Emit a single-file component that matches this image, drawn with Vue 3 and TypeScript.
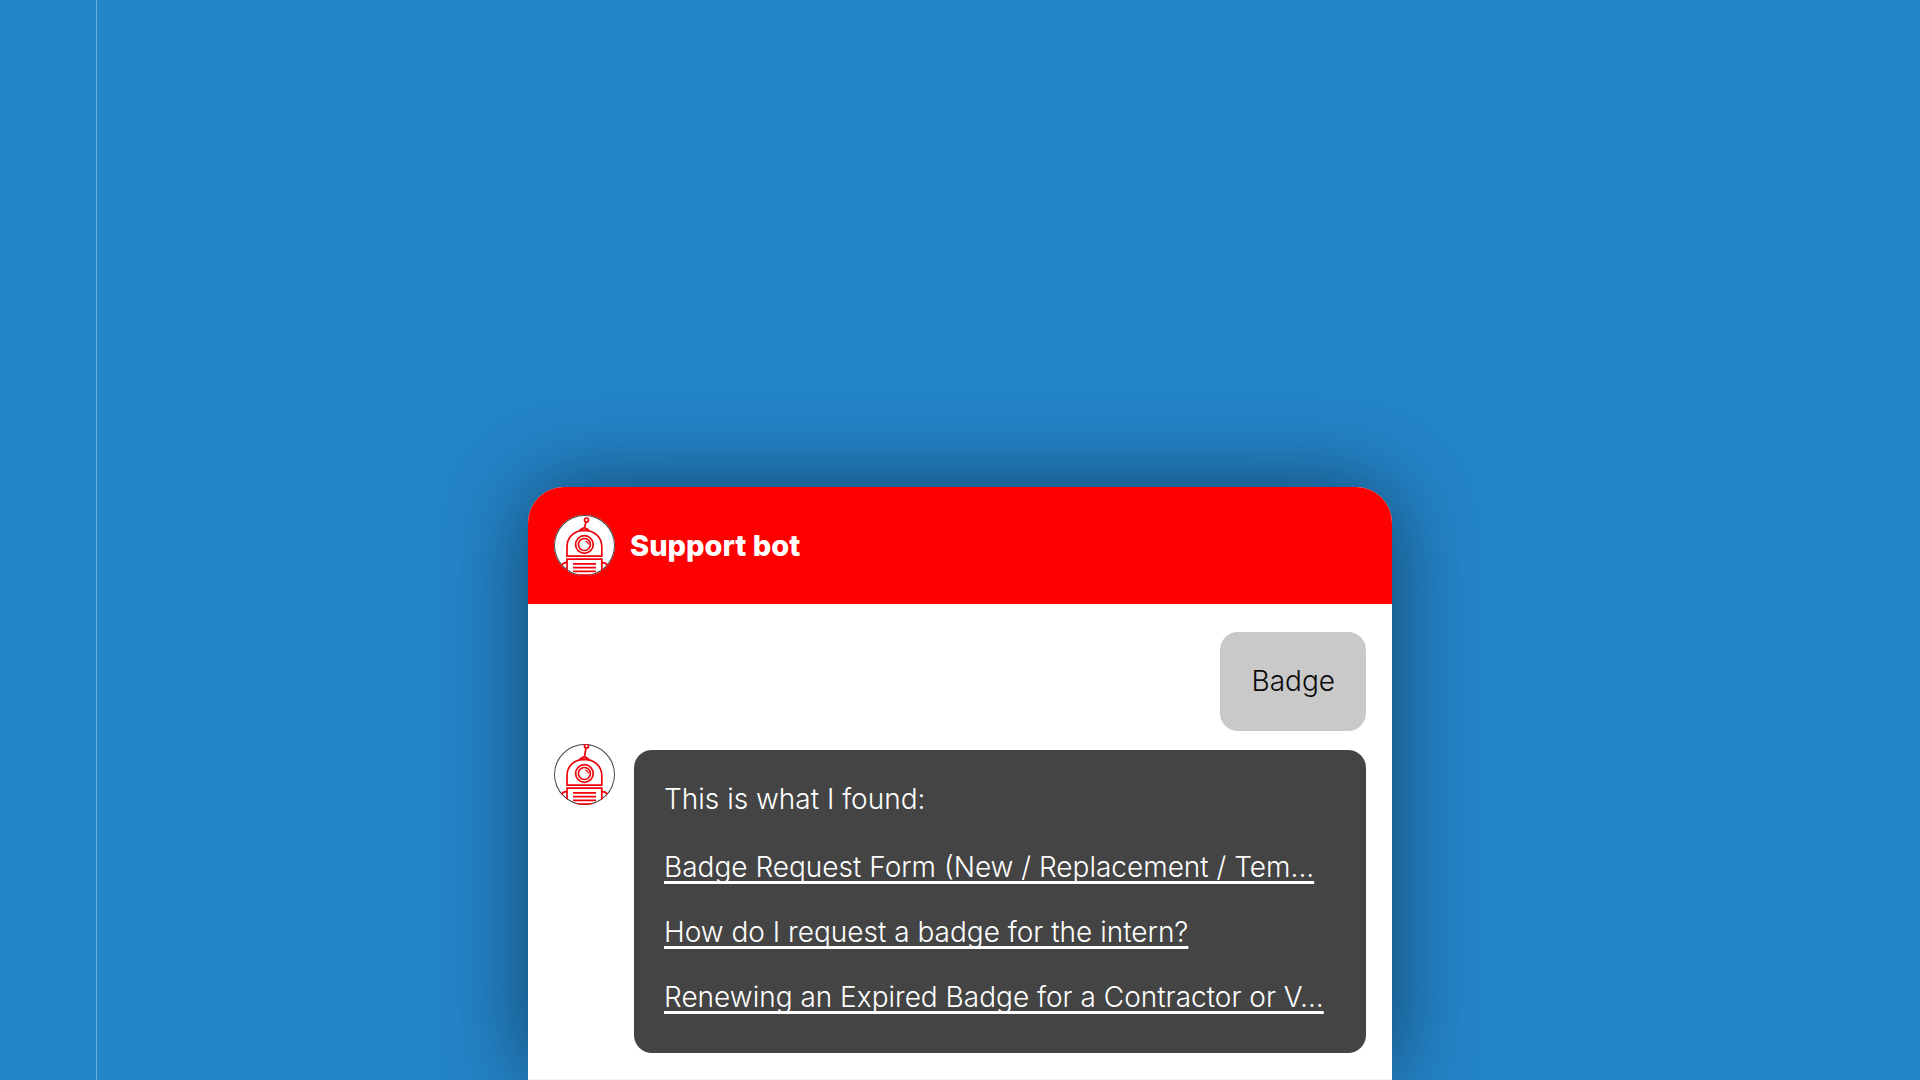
<script setup lang="ts">
import { defineComponent, h } from 'vue'

interface Result {
  label: string
  href: string
}

const results: Result[] = [
  { label: 'Badge Request Form (New / Replacement / Tem...', href: '#badge-request-form' },
  { label: 'How do I request a badge for the intern?', href: '#intern-badge' },
  { label: 'Renewing an Expired Badge for a Contractor or V...', href: '#expired-badge' },
]

// Robot line drawing; the antenna length differs between header and thread.
const BotIcon = defineComponent({
  props: { antennaTop: { type: Number, default: 5 } },
  setup(props) {
    return () =>
      h(
        'svg',
        {
          viewBox: '0 0 61 61',
          width: 61,
          height: 61,
          fill: 'none',
          stroke: '#f00009',
          'stroke-width': 1.7,
          'aria-hidden': 'true',
        },
        [
          h('circle', { cx: 32.5, cy: props.antennaTop, r: 2 }),
          h('path', { d: `M32 ${props.antennaTop + 2}L30.5 12.5` }),
          h('path', { d: 'M25.5 15.4C27.5 14.6 27.6 12.8 30.3 12.8S33 14.6 35 15.4Z' }),
          h('path', { d: 'M13 41.2V32C13 22 20.5 15.4 30.3 15.4S47.8 22 47.8 32V41.2Z' }),
          h('path', { d: 'M13 61V44.2H47.8V61' }),
          h('path', { d: 'M13 47.6C10.5 47.4 8.5 48.6 7.5 50.5M47.8 47.6C50.3 47.4 52.3 48.6 53.3 50.5' }),
          h('path', { d: 'M19 48.9H42M19 52.6H42M19 56.3H42M14 60.2H47' }),
          h('circle', { cx: 30.4, cy: 29.5, r: 8.8 }),
          h('circle', { cx: 30.4, cy: 29.5, r: 6 }),
          h('path', { d: 'M31.5 26.2A3.6 3.6 0 0 1 34.4 29.6', 'stroke-width': 1.1 }),
        ],
      )
  },
})
</script>

<template>
  <div class="page">
    <div class="rail"></div>
    <main class="stage">
      <section class="chat" aria-label="Support bot chat">
        <header class="chat-header">
          <span class="avatar"><BotIcon :antenna-top="5" /></span>
          <h1>Support bot</h1>
        </header>
        <div class="thread">
          <p class="bubble user">Badge</p>
          <div class="reply">
            <span class="avatar"><BotIcon :antenna-top="2" /></span>
            <div class="bubble bot">
              <p>This is what I found:</p>
              <ul>
                <li v-for="result in results" :key="result.href">
                  <a :href="result.href">{{ result.label }}</a>
                </li>
              </ul>
            </div>
          </div>
        </div>
      </section>
    </main>
  </div>
</template>

<style>
body {
  background: #2485c9;
}
</style>

<style scoped>
.page {
  display: grid;
  grid-template-columns: 5% 1fr 5%;
  min-height: 100vh;
  font-family: Inter, 'Open Sans', sans-serif;
  font-size: 28px;
  line-height: 34px;
  font-weight: 300;
}

.stage {
  display: flex;
  justify-content: center;
  align-items: flex-end;
  box-shadow: inset 1px 0 #6eacda;
}

.chat {
  width: 50%;
  background: #fff;
  border-radius: 36px 36px 0 0;
  box-shadow: 0 0 90px rgba(0, 0, 0, 0.5);
}

.chat-header {
  display: flex;
  align-items: center;
  gap: 15px;
  padding: 28px 26px;
  border-radius: 36px 36px 0 0;
  background: #f00;
  color: #fff;
}

h1 {
  margin: 0;
  font-size: 29px;
  font-weight: 800;
}

.avatar {
  display: block;
  flex: none;
  width: 61px;
  height: 61px;
  overflow: hidden;
  border-radius: 50%;
  background: #fff;
  box-shadow: inset 0 0 0 1px #444;
}

.avatar svg {
  display: block;
}

.thread {
  display: flex;
  flex-direction: column;
  gap: 13px;
  padding: 28px 26px 26px;
  border-bottom: 1px solid #f4f4f4;
}

p {
  margin: 0;
}

.bubble {
  border-radius: 18px;
}

.user {
  align-self: flex-end;
  padding: 32px 31px 33px;
  background: #c9c9c9;
  color: #0a0a0a;
}

.reply {
  display: flex;
  align-items: flex-start;
  gap: 19px;
}

.bot {
  flex: 1;
  min-width: 0;
  margin-top: 6px;
  padding: 32px 30px 39px;
  background: #444;
  color: #fff;
}

ul {
  display: flex;
  flex-direction: column;
  gap: 31px;
  margin: 34px 0 0;
  padding: 0;
  list-style: none;
}

a {
  color: inherit;
  text-decoration: underline;
  text-decoration-thickness: 3px;
  text-decoration-skip-ink: none;
  text-underline-offset: 4px;
}
</style>
